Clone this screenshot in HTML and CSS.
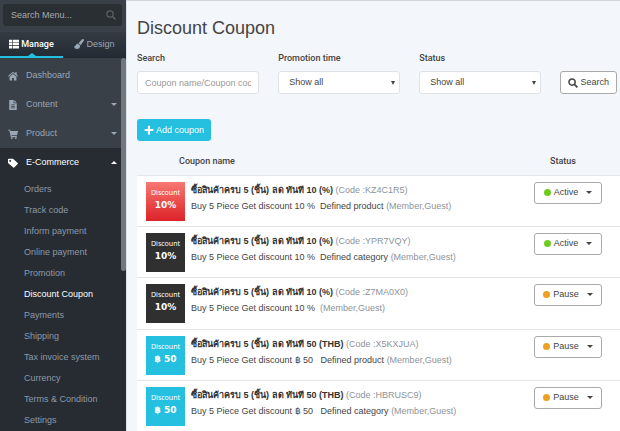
FILE: index.html
```html
<!DOCTYPE html>
<html lang="en">
<head>
    <meta charset="UTF-8">
    <meta name="viewport" content="width=device-width, initial-scale=1.0">
    <title>Discount Coupon</title>
    <link rel="stylesheet" href="styles.css">
</head>
<body>
    <aside class="sidebar">
        <form class="menu-search">
            <input type="text" placeholder="Search Menu..." aria-label="Search Menu">
            <svg class="icon" viewBox="0 0 16 16"><circle cx="6.5" cy="6.5" r="5" fill="none" stroke="currentColor" stroke-width="2"/><path d="M10.5 10.5L15 15" stroke="currentColor" stroke-width="2.4"/></svg>
        </form>
        <div class="tabs">
            <a href="#" class="tab active">
                <svg class="icon" viewBox="0 0 16 16"><path fill="currentColor" d="M0 1h5v4H0zM6 1h10v4H6zM0 6h5v4H0zM6 6h10v4H6zM0 11h5v4H0zM6 11h10v4H6z"/></svg>
                Manage
            </a>
            <a href="#" class="tab">
                <svg class="icon" viewBox="0 0 16 16"><path fill="currentColor" d="M14 0c1.500 0 2.500 1.200 1.700 2.600L10.600 9.800 7.200 6.900 12.500.8C13 .3 13.400 0 14 0zM6.400 7.700l3.400 2.900c.3 3.600-2 5.400-5 5.400C1.500 16 .2 13.600 0 11.200c1.200.9 2 .7 2.400-.6.700-2 2.200-2.900 4-2.900z"/></svg>
                Design
            </a>
        </div>
        <nav class="menu">
            <a href="#" class="menu-item">
                <svg class="icon" viewBox="0 0 16 16"><path fill="currentColor" d="M8 1l3.500 3V2H14v4.200l2 1.800-1 1.200L8 3.200 1 9.200 0 8z"/><path fill="currentColor" d="M8 4.600l5.500 4.700V15H9.500v-4h-3v4h-4V9.300z"/></svg>
                Dashboard
            </a>
            <a href="#" class="menu-item">
                <svg class="icon" viewBox="0 0 16 16"><path fill="currentColor" fill-rule="evenodd" d="M2 0h7v5h5v11H2zM10 0l4 4h-4zM5 7v1.300h6V7zM5 9.500v1.300h6V9.500zM5 12v1.300h6V12z"/></svg>
                Content
                <span class="caret"></span>
            </a>
            <a href="#" class="menu-item">
                <svg class="icon" viewBox="0 0 16 16"><path fill="currentColor" d="M0 1h3.500l.5 2h12l-1.500 7H5.600l.3 1.300H14V13H4.500L2.300 2.500H0z"/><circle cx="6" cy="14.500" r="1.500" fill="currentColor"/><circle cx="12.500" cy="14.500" r="1.500" fill="currentColor"/></svg>
                Product
                <span class="caret"></span>
            </a>
            <div class="menu-open">
                <a href="#" class="menu-item active">
                    <svg class="icon" viewBox="0 0 16 16"><path fill="currentColor" fill-rule="evenodd" d="M0 2.500Q0 1 1.500 1H8l7.500 7q.8.8 0 1.600L10 15.300q-.8.700-1.600 0L0 8zM3.500 3a1.500 1.500 0 1 0 .01 0z"/></svg>
                    E-Commerce
                    <span class="caret up"></span>
                </a>
                <ul class="submenu">
                    <li><a href="#">Orders</a></li>
                    <li><a href="#">Track code</a></li>
                    <li><a href="#">Inform payment</a></li>
                    <li><a href="#">Online payment</a></li>
                    <li><a href="#">Promotion</a></li>
                    <li><a href="#" class="active">Discount Coupon</a></li>
                    <li><a href="#">Payments</a></li>
                    <li><a href="#">Shipping</a></li>
                    <li><a href="#">Tax invoice system</a></li>
                    <li><a href="#">Currency</a></li>
                    <li><a href="#">Terms &amp; Condition</a></li>
                    <li><a href="#">Settings</a></li>
                </ul>
            </div>
            <span class="scroll-thumb"></span>
        </nav>
    </aside>

    <main class="content">
        <h1>Discount Coupon</h1>
        <form class="filters">
            <div class="field">
                <label for="search">Search</label>
                <input type="text" id="search" placeholder="Coupon name/Coupon code">
            </div>
            <div class="field">
                <label for="time">Promotion time</label>
                <div class="select">
                    <select id="time"><option>Show all</option></select>
                </div>
            </div>
            <div class="field">
                <label for="status">Status</label>
                <div class="select">
                    <select id="status"><option>Show all</option></select>
                </div>
            </div>
            <button type="button" class="btn">
                <svg class="icon" viewBox="0 0 16 16"><circle cx="6.500" cy="6.500" r="5" fill="none" stroke="currentColor" stroke-width="2.400"/><path d="M10.300 10.300L15 15" stroke="currentColor" stroke-width="3"/></svg>
                Search
            </button>
        </form>
        <button type="button" class="btn btn-add">
            <svg class="icon" viewBox="0 0 16 16"><path fill="currentColor" d="M6.300 1h3.400v5.300H15v3.400H9.700V15H6.300V9.700H1V6.300h5.300z"/></svg>
            Add coupon
        </button>

        <table class="coupons">
            <thead>
                <tr>
                    <th class="col-badge"></th>
                    <th>Coupon name</th>
                    <th class="col-status">Status</th>
                </tr>
            </thead>
            <tbody>
                <tr>
                    <td><div class="badge red">Discount<b>10%</b></div></td>
                    <td>
                        <p><strong>ซื้อสินค้าครบ 5 (ชิ้น) ลด ทันที 10 (%)</strong> <small>(Code :KZ4C1R5)</small></p>
                        <p>Buy 5 Piece Get discount 10 % &nbsp;Defined product <small>(Member,Guest)</small></p>
                    </td>
                    <td><button type="button" class="btn btn-status"><i class="dot"></i>Active<span class="caret"></span></button></td>
                </tr>
                <tr>
                    <td><div class="badge dark">Discount<b>10%</b></div></td>
                    <td>
                        <p><strong>ซื้อสินค้าครบ 5 (ชิ้น) ลด ทันที 10 (%)</strong> <small>(Code :YPR7VQY)</small></p>
                        <p>Buy 5 Piece Get discount 10 % &nbsp;Defined category <small>(Member,Guest)</small></p>
                    </td>
                    <td><button type="button" class="btn btn-status"><i class="dot"></i>Active<span class="caret"></span></button></td>
                </tr>
                <tr>
                    <td><div class="badge dark">Discount<b>10%</b></div></td>
                    <td>
                        <p><strong>ซื้อสินค้าครบ 5 (ชิ้น) ลด ทันที 10 (%)</strong> <small>(Code :Z7MA0X0)</small></p>
                        <p>Buy 5 Piece Get discount 10 % &nbsp;<small>(Member,Guest)</small></p>
                    </td>
                    <td><button type="button" class="btn btn-status"><i class="dot pause"></i>Pause<span class="caret"></span></button></td>
                </tr>
                <tr>
                    <td><div class="badge blue">Discount<b>฿ 50</b></div></td>
                    <td>
                        <p><strong>ซื้อสินค้าครบ 5 (ชิ้น) ลด ทันที 50 (THB)</strong> <small>(Code :X5KXJUA)</small></p>
                        <p>Buy 5 Piece Get discount ฿ 50 &nbsp; Defined product <small>(Member,Guest)</small></p>
                    </td>
                    <td><button type="button" class="btn btn-status"><i class="dot pause"></i>Pause<span class="caret"></span></button></td>
                </tr>
                <tr>
                    <td><div class="badge blue">Discount<b>฿ 50</b></div></td>
                    <td>
                        <p><strong>ซื้อสินค้าครบ 5 (ชิ้น) ลด ทันที 50 (THB)</strong> <small>(Code :HBRUSC9)</small></p>
                        <p>Buy 5 Piece Get discount ฿ 50 &nbsp; Defined category <small>(Member,Guest)</small></p>
                    </td>
                    <td><button type="button" class="btn btn-status"><i class="dot pause"></i>Pause<span class="caret"></span></button></td>
                </tr>
            </tbody>
        </table>
    </main>
</body>
</html>
```
FILE: styles.css
```css
* {
    box-sizing: border-box;
}
body {
    margin: 0;
    display: flex;
    height: 100vh;
    overflow: hidden;
    background: #f3f6fa;
    color: #444;
    font-family: "Liberation Sans", Arial, sans-serif;
    font-size: 9px;
    line-height: 15px;
}
a {
    color: inherit;
    text-decoration: none;
}
input, select, button {
    font: inherit;
    color: inherit;
}
.icon {
    width: 10px;
    height: 10px;
    flex: none;
}
.caret {
    border: 3px solid transparent;
    border-top-color: currentColor;
    border-bottom-width: 0;
}
.caret.up {
    border-top-width: 0;
    border-bottom: 3px solid currentColor;
}

/* sidebar */
.sidebar {
    flex: 0 0 126px;
    display: flex;
    flex-direction: column;
    overflow: hidden;
    background: #394047;
    color: #9aa7b6;
}
.menu-search {
    display: flex;
    align-items: center;
    margin: 4px 4px 6px 3px;
    padding: 0 6px 0 8px;
    height: 22px;
    border-radius: 3px;
    background: #2a2f34;
}
.menu-search input {
    flex: 1;
    min-width: 0;
    padding: 0;
    border: 0;
    background: none;
    outline: none;
}
.menu-search input::placeholder {
    color: #a5abb1;
}
.menu-search .icon {
    color: #5a6066;
}
.tabs {
    display: flex;
    height: 26px;
    background: linear-gradient(#343b43, #222a33);
}
.tab {
    flex: 1;
    display: flex;
    align-items: center;
    justify-content: center;
    gap: 2px;
    border-bottom: 2px solid transparent;
}
.tab.active {
    position: relative;
    color: #fff;
    font-family: Roboto, sans-serif;
    font-weight: 500;
    border-color: #25bfdf;
}
.tab.active::after {
    content: "";
    position: absolute;
    left: 50%;
    bottom: 0;
    margin-left: -4px;
    border: 4px solid transparent;
    border-top: 0;
    border-bottom: 3px solid #25bfdf;
}
.menu {
    position: relative;
    flex: 1;
    display: flex;
    flex-direction: column;
    padding-top: 3px;
}
.menu-item {
    display: flex;
    align-items: center;
    flex: none;
    gap: 8px;
    height: 29px;
    padding: 0 9px 0 8px;
}
.menu-item .caret {
    margin-left: auto;
}
.menu-open {
    flex: 1;
    background: #262c31;
}
.menu-open .active {
    color: #fff;
}
.submenu {
    margin: 0;
    padding: 2px 0 0 24px;
    list-style: none;
    line-height: 21px;
    color: #8c99ab;
}
.scroll-thumb {
    position: absolute;
    top: 0;
    right: 0;
    width: 5px;
    height: 213px;
    border-radius: 3px;
    background: #70777d;
}

/* content */
.content {
    flex: 1;
    min-width: 0;
    padding: 15px 3px 0 10px;
    border-top: 1px solid #d3d7db;
    border-left: 1px solid #dde3e9;
}
h1 {
    margin: 0 0 11px;
    font-size: 18px;
    font-weight: 400;
    line-height: 24px;
}
.filters {
    display: flex;
    align-items: flex-end;
    gap: 19px;
    margin-bottom: 25px;
}
.field {
    flex: 1;
    min-width: 0;
}
.field label {
    display: block;
    margin-bottom: 5px;
    font-family: Roboto, sans-serif;
    font-weight: 500;
}
.field input, .field select {
    display: block;
    width: 100%;
    height: 23px;
    padding: 0 7px;
    border: 1px solid #dfe3e8;
    border-radius: 3px;
    background: #fff;
}
.field input::placeholder {
    color: #999;
}
.field select {
    appearance: none;
    padding-left: 10px;
}
.select {
    position: relative;
}
.select::after {
    content: "";
    position: absolute;
    top: 10px;
    right: 5px;
    border: 2px solid transparent;
    border-top: 4px solid #444;
    border-bottom: 0;
}
.btn {
    display: flex;
    align-items: center;
    justify-content: center;
    gap: 2px;
    height: 23px;
    padding: 0 7px;
    border: 1px solid #aaa;
    border-radius: 3px;
    background: #fff;
    cursor: pointer;
}
.btn-add {
    height: 22px;
    border: 0;
    background: #25bfdf;
    color: #fff;
}
.coupons {
    width: calc(100% + 3px);
    margin-top: 6px;
    border-collapse: collapse;
    table-layout: fixed;
}
.coupons th {
    height: 28px;
    padding: 2px 0 0;
    font-family: Roboto, sans-serif;
    font-weight: 500;
    text-align: left;
}
.coupons .col-badge {
    width: 42px;
}
.coupons .col-status {
    width: 86px;
    padding-left: 16px;
}
.coupons tbody tr {
    height: 51px;
    border-top: 1px solid #e4e7ea;
    background: #fff;
}
.coupons tbody tr:nth-child(3n) {
    height: 52px;
}
.coupons td {
    padding: 6px 0 0;
    vertical-align: top;
}
.coupons td:first-child {
    padding-left: 9px;
}
.coupons td:nth-child(2) {
    padding: 7px 0 0 12px;
}
.coupons p {
    margin: 0 0 1px;
    white-space: nowrap;
}
.coupons strong {
    color: #333;
}
.coupons small {
    font-size: 9px;
    color: #8d939a;
}
.badge {
    display: flex;
    flex-direction: column;
    align-items: center;
    width: 39px;
    height: 39px;
    padding-top: 5px;
    color: #fff;
    font-family: "Noto Sans", sans-serif;
    font-size: 7px;
    line-height: 12px;
}
.badge b {
    font-family: "DejaVu Sans", sans-serif;
    font-size: 9px;
}
.badge.red {
    background: linear-gradient(#f87872, #dc2228);
}
.badge.dark {
    background: #303030;
}
.badge.blue {
    background: #25bfdf;
}
.btn-status {
    width: 68px;
    height: 22px;
    gap: 3px;
}
.btn-status .caret {
    margin-left: 5px;
}
.dot {
    flex: none;
    width: 7px;
    height: 7px;
    border-radius: 50%;
    background: #70cc1c;
}
.dot.pause {
    background: #f0a020;
}
```
